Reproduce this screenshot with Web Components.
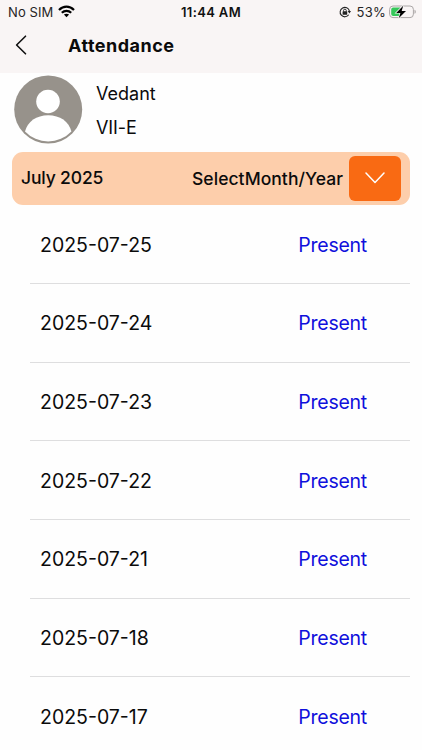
<!DOCTYPE html>
<html lang="en">
<head>
<meta charset="UTF-8">
<meta name="viewport" content="width=device-width, initial-scale=1.0">
<title>Attendance</title>
<style>
    body { margin: 0; background: #fefefe; color: #0b0b0b; font-family: Inter, "Liberation Sans", sans-serif; overflow: hidden; }
</style>
</head>
<body>
<attendance-page></attendance-page>

<script>
    const days = ['2025-07-25', '2025-07-24', '2025-07-23', '2025-07-22', '2025-07-21', '2025-07-18', '2025-07-17'];

    class StatusBar extends HTMLElement {
        connectedCallback() {
            this.attachShadow({ mode: 'open' }).innerHTML = `
                <style>
                    :host { display: grid; grid-template-columns: 1fr auto 1fr; height: 24px; align-items: center; padding: 0 6px 0 8px; font-size: 13px; line-height: 24px; color: #262424; }
                    div { display: flex; align-items: center; white-space: nowrap; }
                    .carrier { letter-spacing: 0.1px; }
                    .wifi { margin: -1px 0 0 5px; }
                    .time { margin-left: -2px; font-weight: 600; letter-spacing: 0.35px; color: #111; }
                    .right { justify-content: flex-end; }
                    .lock { margin-right: 1px; }
                    .percent { margin: 0 3px 0 5px; letter-spacing: 0.25px; }
                </style>
                <div class="left">
                    <span class="carrier">No SIM</span>
                    <svg class="wifi" width="17" height="13" viewBox="0 0 17 13" fill="none" stroke="#000" stroke-width="2.2">
                        <path d="M1 4.9C5.3.5 11.7.5 16 4.9"/>
                        <path d="M3.8 7.8C6.5 5.2 10.5 5.2 13.2 7.8"/>
                        <path d="M8.5 12.2 5.9 9.6C7.3 8.3 9.7 8.3 11.1 9.6Z" fill="#000" stroke="none"/>
                    </svg>
                </div>
                <div class="time">11:44 AM</div>
                <div class="right">
                    <svg class="lock" width="12" height="12" viewBox="0 0 12 12" fill="none" stroke="#222" stroke-width="1.1">
                        <path d="M9.7 8.8A4.7 4.7 0 1 1 10.4 5"/>
                        <path d="M8.7 5H12L10.4 7.4Z" fill="#222" stroke="none"/>
                        <path d="M4.5 5.5V4.6a1.4 1.4 0 0 1 2.8 0v.9" stroke-width=".9"/>
                        <rect x="3.6" y="5.2" width="4.6" height="3.5" rx=".5" fill="#222" stroke="none"/>
                    </svg>
                    <span class="percent">53%</span>
                    <svg width="27" height="14" viewBox="0 0 27 14">
                        <rect x=".6" y="1" width="23.8" height="11.6" rx="3.4" fill="none" stroke="#aaa6a6"/>
                        <path d="M25.5 4.8c1.7.6 1.7 3.4 0 4Z" fill="#aaa6a6"/>
                        <path d="M4.2 2.6H11.2V11H4.2a2 2 0 0 1-2-2V4.600a2 2 0 0 1 2-2Z" fill="#34c759"/>
                        <path d="M14.200.8 7.200 7.900h4.200L9.700 13.200 17 6h-4.300Z" fill="#000" stroke="#f9f5f5" stroke-width="1.4" paint-order="stroke"/>
                    </svg>
                </div>
            `;
        }
    }
    customElements.define('status-bar', StatusBar);

    class NavBar extends HTMLElement {
        connectedCallback() {
            this.attachShadow({ mode: 'open' }).innerHTML = `
                <style>
                    :host { display: flex; align-items: center; height: 49px; padding: 0 15px; box-sizing: border-box; }
                    svg { flex: none; margin-top: -7px; }
                    h1 { margin: -6px 0 0 41px; font-size: 18px; line-height: 24px; font-weight: 650; letter-spacing: 0.5px; }
                </style>
                <svg width="12" height="20" viewBox="0 0 12 20" fill="none" stroke="#111" stroke-width="1.6" stroke-linecap="round" stroke-linejoin="round"><path d="M10.5 1.2 1.6 10l8.9 8.8"/></svg>
                <h1><slot></slot></h1>
            `;
        }
    }
    customElements.define('nav-bar', NavBar);

    class StudentInfo extends HTMLElement {
        connectedCallback() {
            this.attachShadow({ mode: 'open' }).innerHTML = `
                <style>
                    :host { display: flex; height: 78.5px; padding: 2px 14px 0; box-sizing: border-box; }
                    svg { flex: none; }
                    .text { margin: 2px 0 0 13px; font-size: 18px; line-height: 34px; }
                    .grade { letter-spacing: -0.1px; }
                </style>
                <svg width="69" height="69" viewBox="0 0 69 69">
                    <circle cx="34.2" cy="34.5" r="34" fill="#97928b"/>
                    <circle cx="34" cy="26.5" r="11.8" fill="#fff"/>
                    <path d="M11 56.5C13.5 46.5 22.5 40.3 34.2 40.3S55 46.5 57.4 56.500A32 32 0 0 1 11 56.500Z" fill="#fff"/>
                </svg>
                <div class="text">
                    <div class="name">${this.getAttribute('name')}</div>
                    <div class="grade">${this.getAttribute('grade')}</div>
                </div>
            `;
        }
    }
    customElements.define('student-info', StudentInfo);

    class MonthPicker extends HTMLElement {
        connectedCallback() {
            this.attachShadow({ mode: 'open' }).innerHTML = `
                <style>
                    :host { display: flex; align-items: center; height: 53.5px; margin: 0 12px; padding: 0 9px; box-sizing: border-box; border-radius: 11px; background: #fdceab; font-size: 17.5px; font-weight: 500; }
                    .month { flex: 1; margin-top: -2px; letter-spacing: -0.15px; }
                    .label { letter-spacing: 0.05px; }
                    button { display: flex; align-items: center; justify-content: center; width: 52px; height: 45px; margin: 0 0 0 6px; padding: 0; border: 0; border-radius: 6px; background: #f96a13; }
                </style>
                <span class="month">${this.getAttribute('month')}</span>
                <span class="label"><slot></slot></span>
                <button aria-label="Select month">
                    <svg width="20" height="12" viewBox="0 0 20 12" fill="none" stroke="#fff" stroke-width="1.5" stroke-linecap="round" stroke-linejoin="round"><path d="M1 1 10 10.5 19 1"/></svg>
                </button>
            `;
        }
    }
    customElements.define('month-picker', MonthPicker);

    class AttendanceRow extends HTMLElement {
        connectedCallback() {
            this.attachShadow({ mode: 'open' }).innerHTML = `
                <style>
                    :host { display: flex; align-items: center; justify-content: space-between; height: 78.7px; margin: 0 12px 0 29.5px; padding: 1px 43px 0 10.5px; box-sizing: border-box; border-bottom: 1px solid #dededf; font-size: 19.5px; line-height: 24px; }
                    .status { color: #1010dc; letter-spacing: -0.25px; }
                </style>
                <span class="date">${this.getAttribute('date')}</span>
                <span class="status">${this.getAttribute('status')}</span>
            `;
        }
    }
    customElements.define('attendance-row', AttendanceRow);

    class AttendancePage extends HTMLElement {
        connectedCallback() {
            this.attachShadow({ mode: 'open' }).innerHTML = `
                <style>
                    :host { display: block; height: 750px; overflow: hidden; }
                    header { background: #f9f5f5; }
                    section { padding-top: 0.3px; }
                </style>
                <header>
                    <status-bar></status-bar>
                    <nav-bar>Attendance</nav-bar>
                </header>
                <student-info name="Vedant" grade="VII-E"></student-info>
                <month-picker month="July 2025">SelectMonth/Year</month-picker>
                <section>
                    ${days.map(day => `<attendance-row date="${day}" status="Present"></attendance-row>`).join('')}
                </section>
            `;
        }
    }
    customElements.define('attendance-page', AttendancePage);
</script>
</body>
</html>
